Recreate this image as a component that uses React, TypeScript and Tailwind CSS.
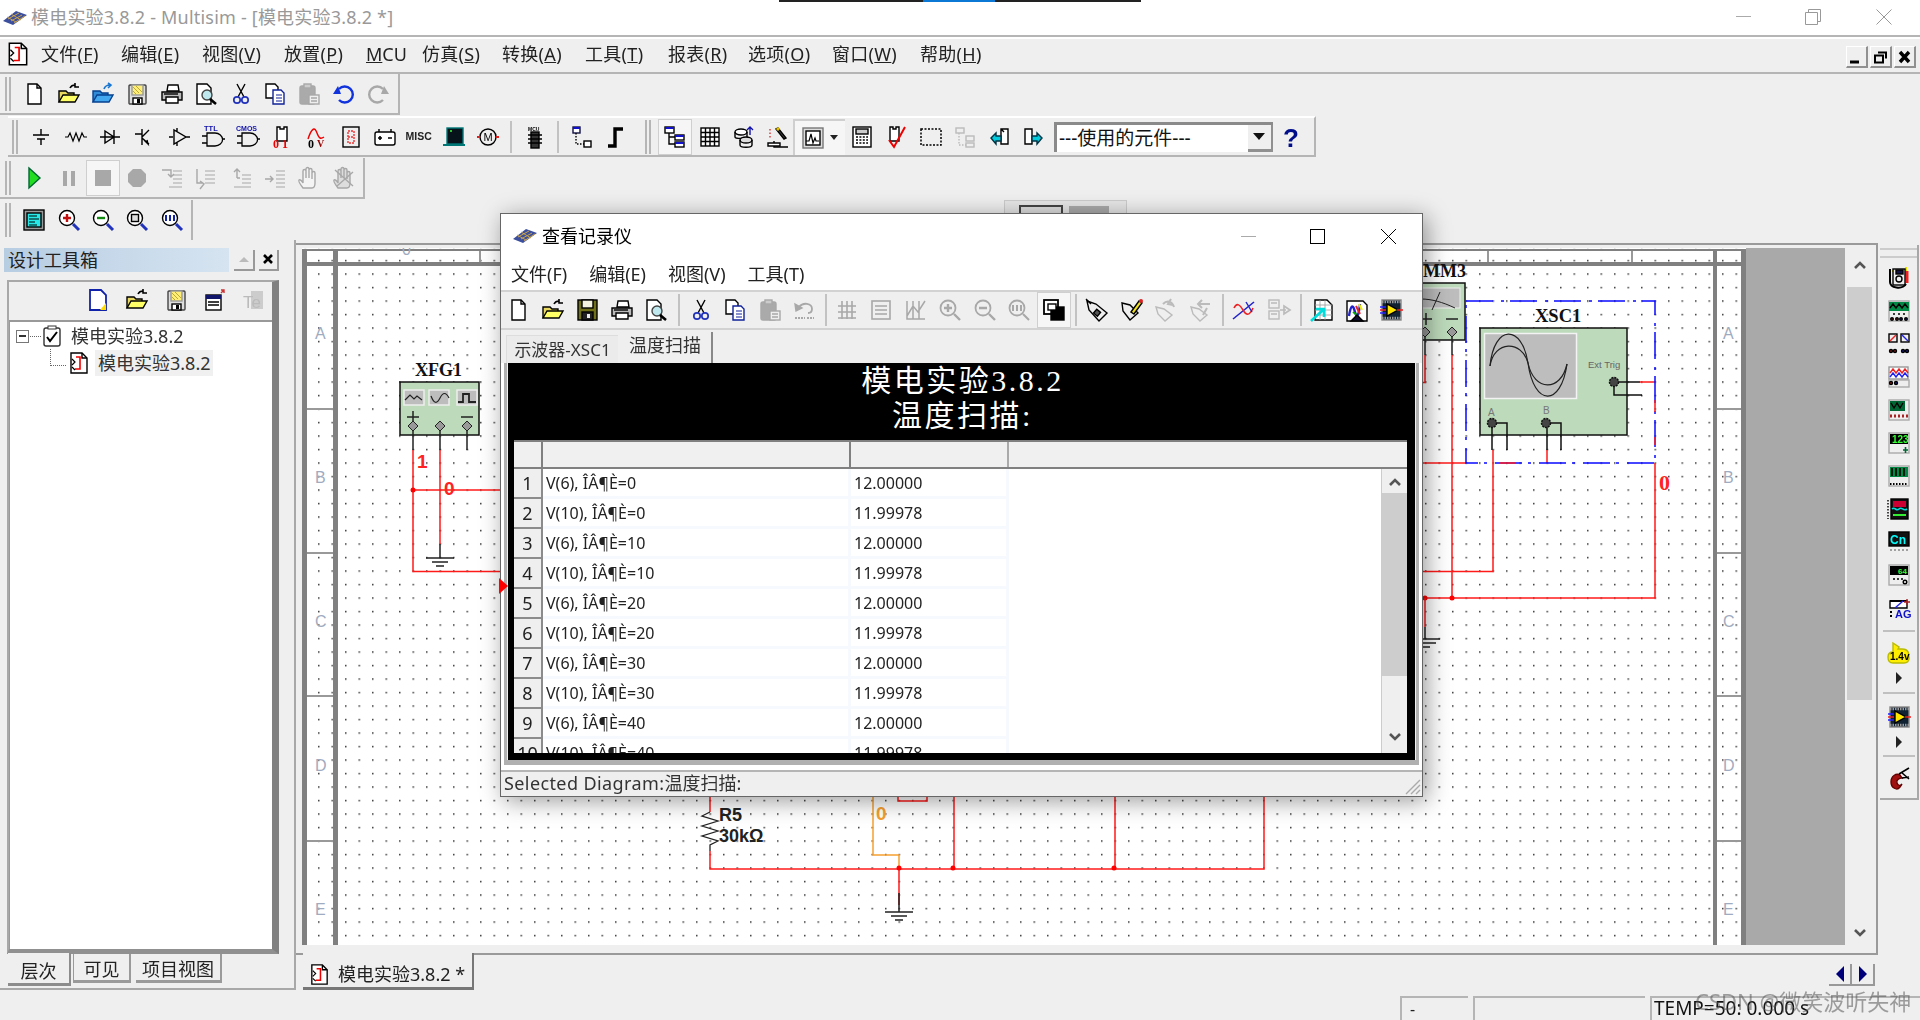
import React from "react";

const S = ({ w = 24, h = 24, children }: any) => (
  <svg width={w} height={h} viewBox="0 0 24 24" fill="none" stroke="#000" strokeWidth="1.4" className="shrink-0 overflow-visible">
    {children}
  </svg>
);
const G = "#a8a8a8";
const logoChip = (
  <svg width="26" height="16" viewBox="0 0 26 16" className="shrink-0">
    <path d="M1 11 L14 1 L25 5 L11 15 Z" fill="#3b4f9e" />
    <path d="M6 9 L17 3 M9 11 L20 5 M12 13 L23 6 M5 7 L14 12 M9 4 L19 10" stroke="#c9a24a" strokeWidth="1" />
  </svg>
);
const schem = (
  <>
    <path d="M4 2h11l5 5v15H4z" fill="#fff" />
    <path d="M15 2v5h5" />
    <path d="M9 6h4v4M13 10v8H8" stroke="#e00" strokeWidth="1.6" />
    <path d="M5 8l3 3-3 3M5 16l3 3" strokeWidth="1.2" />
  </>
);
const ic: any = {
  new: <><path d="M6 2h9l4 4v16H6z" fill="#fff" /><path d="M15 2v4h4" /></>,
  openY: <><path d="M2 20V9h7l2 2h6v3" fill="#e8d860" /><path d="M2 20l4-7h16l-4 7z" fill="#ffff66" /><path d="M13 6c1-2 3-3 5-3M18 1v4h4" strokeWidth="1.6" /></>,
  openB: <><path d="M2 20V9h7l2 2h6v3" fill="#2f8ad8" stroke="#06408f" /><path d="M2 20l4-7h16l-4 7z" fill="#43a7ef" stroke="#06408f" /><path d="M13 7c1-3 3-4 6-4M17 1l3 2-3 3" stroke="#1976d2" strokeWidth="1.6" /></>,
  save: <><rect x="4" y="3" width="17" height="19" rx="1" fill="#ddd" stroke="#444" /><rect x="7" y="3" width="11" height="10" fill="#ffee77" stroke="#999" /><path d="M8 5l6 6M11 4l6 6M8 9l3 3" stroke="#bbaa33" strokeWidth="1" /><rect x="8" y="16" width="9" height="6" fill="#fff" /><rect x="12" y="17" width="3" height="4" fill="#000" stroke="none" /></>,
  saveD: <><rect x="3" y="2" width="19" height="20" fill="#707018" /><rect x="7" y="2" width="11" height="8" fill="#f4f4e0" /><rect x="7" y="14" width="11" height="8" fill="#222" /><rect x="12" y="16" width="3" height="4" fill="#eee" stroke="none" /></>,
  print: <><path d="M8 3h10l1 6H7z" fill="#fff" /><path d="M2 10h20v8H2z" fill="#bbb" /><path d="M6 15h12v6H6z" fill="#fff" /><path d="M4 12h14" /></>,
  preview: <><path d="M3 2h10l4 4v16H3z" fill="#fff" /><circle cx="13" cy="13" r="5" fill="#bfe8ee" stroke="#444" /><path d="M16 17l6 5" strokeWidth="2.6" /></>,
  cut: <><path d="M8 2l7 13M16 2L9 15" /><circle cx="8" cy="18" r="3.2" stroke="#2233bb" strokeWidth="1.7" /><circle cx="16" cy="18" r="3.2" stroke="#2233bb" strokeWidth="1.7" /></>,
  copy: <><path d="M3 2h9l3 3v11H3z" fill="#fff" /><path d="M10 8h8l3 3v11H10z" fill="#fff" stroke="#112299" /><path d="M13 13h6M13 16h6M13 19h6" stroke="#112299" strokeWidth="1.2" /></>,
  paste: <g stroke={G}><rect x="3" y="4" width="15" height="18" rx="2" fill="#aaa" /><rect x="7" y="2" width="7" height="4" fill="#ccc" /><rect x="12" y="13" width="10" height="9" fill="#eee" /><path d="M14 16h6M14 19h6" /></g>,
  undo: <><path d="M7 7a8 8 0 1 1 0 11" stroke="#1133dd" strokeWidth="2.4" /><path d="M1 12l8 0-3-8z" fill="#1133dd" stroke="none" /></>,
  redo: <g stroke={G}><path d="M17 7a8 8 0 1 0 0 11" strokeWidth="2.4" /><path d="M23 12l-8 0 3-8z" fill={G} stroke="none" /></g>,
  undoG: <g stroke={G}><path d="M7 9c4-5 13-4 13 2 0 3-2 4-4 4" strokeWidth="1.8" /><path d="M3 6l1 7 6-3z" fill={G} /><path d="M3 20h10M15 20h7" strokeDasharray="2 1" strokeWidth="2" /></g>,
  src: <><path d="M12 4v6M4 10h16M8 14h8M12 14v6" /></>,
  res: <path d="M1 12h3l2-4 3 8 3-8 3 8 3-8 2 4h3" strokeWidth="1.2" />,
  diode: <><path d="M2 12h20M7 6l9 6-9 6zM16 5v14" /></>,
  trans: <><path d="M10 4v16M10 9l-7 0M10 12l7-7M10 13l7 6M12 15l4 4-1-4" /></>,
  diamond: <><path d="M2 12h4M7 5v14l12-7zM19 12h4M10 3v4M10 17v4" /></>,
  ttl: <><path d="M1 11h5M1 18h5M6 8h8a7 6 0 0 1 0 13H6zM21 14h3" strokeWidth="1.3" /><text x="3" y="6" fontSize="7.5" fontWeight="bold" fill="#11a" stroke="none" fontFamily="Liberation Sans">TTL</text></>,
  cmos: <><path d="M1 11h5M1 18h5M6 8h8a7 6 0 0 1 0 13H6zM21 14h3" strokeWidth="1.3" /><text x="0" y="6" fontSize="7" fontWeight="bold" fill="#11a" stroke="none" fontFamily="Liberation Sans">CMOS</text></>,
  d01: <><path d="M7 2h3v2h4V2h3v14H7z" fill="#fff" /><text x="3" y="23" fontSize="12" fontWeight="bold" fill="#e00" stroke="none" fontFamily="Liberation Serif">0 1</text></>,
  d0v: <><path d="M4 14C8 2 11 2 13 8s4 6 7 4" stroke="#e00" /><text x="4" y="23" fontSize="12" fontWeight="bold" fill="#000" stroke="none" fontFamily="Liberation Serif">0</text><text x="13" y="22" fontSize="10" fontWeight="bold" fill="#900" stroke="none" fontFamily="Liberation Serif">V</text></>,
  seg: <><rect x="4" y="2" width="16" height="20" fill="#eee" /><path d="M9 6h6v12H9zM9 12h6" stroke="#e33" strokeDasharray="2 1" /></>,
  bat: <><path d="M4 7h16a2 2 0 0 1 2 2v9a2 2 0 0 1-2 2H4a2 2 0 0 1-2-2V9a2 2 0 0 1 2-2zM6 4v3M18 4v3" fill="#fff" /><path d="M5 13h4M7 11v4M15 13h4" strokeWidth="1.6" /></>,
  misc: <text x="-1.500" y="15" fontSize="10.500" fontWeight="bold" fill="#222" stroke="none" fontFamily="Liberation Sans">MISC</text>,
  pc: <><rect x="5" y="3" width="16" height="16" fill="#06131a" stroke="#077" /><rect x="1" y="19" width="22" height="2" fill="#077" stroke="none" /><path d="M8 6h2" stroke="#3f3" /></>,
  motor: <><circle cx="12" cy="12" r="8" fill="#eee" /><path d="M1 12h3M20 12h3" stroke="#d22" strokeWidth="2" /><text x="7.5" y="16" fontSize="11" fill="#000" stroke="none" fontFamily="Liberation Sans">M</text></>,
  chip: <><text x="5" y="6" fontSize="5" fontWeight="bold" fill="#000" stroke="none" fontFamily="Liberation Sans">MCU</text><rect x="8" y="7" width="8" height="16" fill="#333" /><path d="M5 10h14M5 14h14M5 18h14" /></>,
  hier: <><rect x="3" y="2" width="7" height="6" fill="#fff" stroke="#114" /><rect x="3" y="2" width="7" height="2" fill="#11c" stroke="none" /><rect x="14" y="16" width="7" height="6" fill="#fff" /><path d="M6 8v11h8" strokeDasharray="1.5 1.5" /></>,
  step: <path d="M4 21h7V4h8" strokeWidth="3.4" />,
  tree: <><rect x="2" y="2" width="9" height="6" fill="#fff" /><rect x="2" y="2" width="9" height="2" fill="#11c" stroke="none" /><rect x="12" y="10" width="9" height="5" fill="#fff" /><rect x="12" y="10" width="9" height="2" fill="#11c" stroke="none" /><rect x="12" y="17" width="9" height="5" fill="#fff" /><rect x="12" y="17" width="9" height="2" fill="#11c" stroke="none" /><path d="M6 8v11h6M6 12h6" /></>,
  grid: <><rect x="3" y="3" width="18" height="18" fill="#fff" /><path d="M3 7.500h18M3 12h18M3 16.500h18M7.500 3v18M12 3v18M16.500 3v18" /></>,
  db: <><ellipse cx="9" cy="7" rx="6" ry="3" fill="#fff" /><path d="M3 7v5c0 2 12 2 12 0V7" /><ellipse cx="14" cy="15" rx="6" ry="3" fill="#ddd" /><path d="M8 15v5c0 3 12 3 12 0v-5" /><path d="M18 2v8M15 5l3-3 3 3" stroke="#11a" /></>,
  pencil: <><path d="M8 16V22H22" /><path d="M2 18h12v3H2z" fill="#fff" /><path d="M12 3l8 10-2 1-8-10z" fill="#444" /><path d="M11 3l2 2" stroke="#e6c000" strokeWidth="3" /><path d="M4 4v10" stroke="#d33" strokeDasharray="1.5 2" /></>,
  graph: <><rect x="2" y="2" width="20" height="20" fill="#ddd" stroke="#777" /><rect x="5" y="5" width="14" height="14" fill="#fff" /><path d="M5 15h3l2-7 2 9 2-5 1 3h3" strokeWidth="1.2" /></>,
  calc: <><rect x="3" y="2" width="18" height="20" fill="#fff" /><rect x="6" y="4" width="12" height="5" fill="#ccc" /><path d="M6 12h12M6 15h12M6 18h12" strokeDasharray="2 1.4" strokeWidth="1.6" /></>,
  check: <><path d="M6 2h3v2h3V2h3v14H6z" fill="#fff" /><path d="M5 15l5 7L21 2" stroke="#e00" strokeWidth="2" /></>,
  dash: <rect x="2" y="4" width="20" height="16" strokeDasharray="2 1.5" strokeWidth="1.5" />,
  treeG: <g stroke="#bbb"><rect x="3" y="3" width="8" height="5" /><rect x="13" y="11" width="8" height="5" /><rect x="13" y="18" width="8" height="4" /><path d="M6 8v12h7" strokeDasharray="1.5 1.5" /></g>,
  arrL: <><path d="M14 4h7v15h-7zM14 4l3 3" fill="#fff" /><path d="M4 13l5-5v3h5v5H9v3z" fill="#0cd" stroke="#034" /></>,
  arrR: <><path d="M3 4h7v15H3z" fill="#fff" /><path d="M20 13l-5-5v3h-5v5h5v3z" fill="#0cd" stroke="#034" /></>,
  q: <text x="3" y="22" fontSize="26" fontWeight="bold" fill="#000e8c" stroke="none" fontFamily="Liberation Sans">?</text>,
  play: <path d="M7 2l11 10-11 10z" fill="#22dd22" stroke="#063" />,
  pause: <><rect x="6" y="5" width="4" height="15" fill={G} stroke="none" /><rect x="14" y="5" width="4" height="15" fill={G} stroke="none" /></>,
  stop: <rect x="4" y="4" width="16" height="16" fill={G} stroke="none" />,
  rec: <path d="M8 3h8l5 5v8l-5 5H8l-5-5V8z" fill={G} stroke="none" />,
  s1: <g stroke={G}><path d="M2 4h9v7M8 8l3 3 3-3" /><path d="M13 5h9M13 9h9M13 13h9M13 17h9M9 21h13" strokeWidth="1.2" /></g>,
  s2: <g stroke={G}><path d="M3 3v14h6M6 23l4-5-4-3" /><path d="M11 5h10M11 9h10M11 13h10M11 17h10" strokeWidth="1.2" /></g>,
  s3: <g stroke={G}><path d="M8 12V3M5 6l3-3 3 3M8 12h3" /><path d="M13 9h9M13 13h9M13 17h9M5 21h17" strokeWidth="1.2" /></g>,
  s4: <g stroke={G}><path d="M2 13h8M7 10l3 3-3 3" /><path d="M13 5h9M13 9h9M13 13h9M13 17h9M13 21h9" strokeWidth="1.2" /></g>,
  hand: <g stroke={G}><path d="M6 22c-3-4-5-7-4-8s3 1 4 3V5a1.500 1.500 0 0 1 3 0v7-9a1.500 1.500 0 0 1 3 0v9-8a1.500 1.500 0 0 1 3 0v9-6a1.500 1.500 0 0 1 3 0v10c0 4-1 5-3 5z" fill="#f4f4f4" /></g>,
  hand2: <g stroke={G}><path d="M6 22c-3-4-5-7-4-8s3 1 4 3V5a1.500 1.500 0 0 1 3 0v7-9a1.500 1.500 0 0 1 3 0v9-8a1.500 1.500 0 0 1 3 0v9-6a1.500 1.500 0 0 1 3 0v10c0 4-1 5-3 5z" fill="#ddd" /><path d="M3 4l18 16M21 6L5 20" /></g>,
  screen: <><rect x="2" y="2" width="20" height="20" fill="#999" /><rect x="5" y="5" width="14" height="14" fill="#27e8e8" /><path d="M7 8h8M7 11h10M7 14h6M7 17h8" strokeWidth="1.1" /></>,
  zi: <><circle cx="10" cy="10" r="7.500" fill="#fff" /><path d="M6 10h8M10 6v8" stroke="#c01010" strokeWidth="2.4" /><path d="M16 16l6 6" stroke="#2233bb" strokeWidth="3" /></>,
  zo: <><circle cx="10" cy="10" r="7.500" fill="#fff" /><path d="M6 10h8" stroke="#128a12" strokeWidth="2.4" /><path d="M16 16l6 6" stroke="#2233bb" strokeWidth="3" /></>,
  za: <><circle cx="10" cy="10" r="7.500" fill="#fff" /><rect x="6.500" y="6.500" width="7" height="7" fill="#ddd" /><path d="M16 16l6 6" stroke="#2233bb" strokeWidth="3" /></>,
  zf: <><circle cx="10" cy="10" r="7.500" fill="#fff" /><path d="M6 7v6M10 7v6M14 7v6" stroke="#1122aa" strokeWidth="2" /><path d="M16 16l6 6" stroke="#2233bb" strokeWidth="3" /></>,
  pNew: <><path d="M4 2h11l5 5v15H4z" fill="#fff" stroke="#1122aa" strokeWidth="1.8" /><path d="M14 22l6-7v7z" fill="#ffdd00" stroke="none" /></>,
  pWin: <><rect x="3" y="7" width="15" height="15" fill="#fff" /><rect x="3" y="7" width="15" height="4" fill="#11166a" stroke="none" /><path d="M5 14h11M5 17h11" /><path d="M18 5l3-3M18 2h3v3" stroke="#c33" /></>,
  pT: <><rect x="9" y="3" width="12" height="18" fill="#ccc" stroke="none" /><text x="1" y="20" fontSize="17" fill="#bbb" stroke="none" fontFamily="Liberation Sans">Te</text></>,
  gGrid: <g stroke={G}><path d="M3 8h18M3 14h18M3 20h18M7 3v18M12 3v18M17 3v18" strokeWidth="1.6" /></g>,
  gList: <g stroke={G}><rect x="3" y="3" width="18" height="18" strokeWidth="1.6" /><path d="M6 8h12M6 12h12M6 16h12" strokeWidth="1.6" /></g>,
  gChart: <g stroke={G}><path d="M3 3v18h18M9 3v18M15 3v18M3 18l6-10 5 6 7-11" strokeWidth="1.5" /></g>,
  gZi: <g stroke={G}><circle cx="10" cy="10" r="7.500" strokeWidth="1.8" /><path d="M6 10h8M10 6v8M16 16l6 6" strokeWidth="2.4" /></g>,
  gZo: <g stroke={G}><circle cx="10" cy="10" r="7.500" strokeWidth="1.8" /><path d="M6 10h8M16 16l6 6" strokeWidth="2.4" /></g>,
  gZf: <g stroke={G}><circle cx="10" cy="10" r="7.500" strokeWidth="1.8" /><path d="M6 7v6M10 7v6M14 7v6M16 16l6 6" strokeWidth="2" /></g>,
  overlay: <><rect x="2" y="2" width="14" height="14" fill="#fff" strokeWidth="1.8" /><rect x="9" y="9" width="13" height="13" fill="#000" /><rect x="6" y="6" width="8" height="6" fill="#fff" strokeWidth="1.4" /></>,
  tag: <><path d="M2 3l9 3 11 9-8 8-10-11z" fill="#eee" /><path d="M1 1l5 5" /><rect x="10" y="12" width="5" height="5" fill="#555" transform="rotate(40 12 14)" /></>,
  tagP: <><path d="M2 5l8 2 8 8-8 7-7-9z" fill="#eee" /><path d="M11 14l8-11 3 2-8 11z" fill="#f0e020" /><circle cx="21" cy="3" r="2" fill="#d22" stroke="none" /></>,
  tagG1: <g stroke="#bbb"><path d="M2 9l8 2 8 6-7 6-7-7z" /><path d="M9 6c4-4 9-3 11 3M17 1l-3 5 5 1" strokeWidth="2" /></g>,
  tagG2: <g stroke="#bbb"><path d="M2 9l8 2 8 6-7 6-7-7z" /><path d="M9 6h12M13 2l-4 4 4 4M18 10l-4 7" strokeWidth="2" /></g>,
  wave: <><path d="M1 21L22 4" stroke="#22c" strokeWidth="1.6" /><path d="M2 10c3-6 6-3 9 2s6 7 10-2" stroke="#e22" strokeWidth="1.6" /><path d="M14 4l6 10" stroke="#22c" strokeWidth="1.4" /></>,
  exp: <g stroke="#bbb"><rect x="2" y="2" width="10" height="8" /><rect x="2" y="13" width="10" height="8" /><path d="M13 12h6M17 8l6 4-6 4z" strokeWidth="1.7" /><path d="M4 5h6M4 16h6" /></g>,
  docA: <><path d="M5 2h12l5 5v15H5z" fill="#fff" /><path d="M5 7h17M5 12h17M5 17h17M10 2v20M15 2v20" stroke="#999" strokeWidth=".8" /><path d="M1 23l12-11M6 11h8v8" stroke="#0dd" strokeWidth="2.6" /></>,
  docG: <><path d="M2 3h16l4 4v16H2z" fill="#fff" /><path d="M4 18c2-12 4-12 6-4s4 2 5-8" stroke="#22c" strokeWidth="2.4" /><path d="M11 8l4 8" stroke="#e22" strokeWidth="2" /><path d="M8 14l4 3" stroke="#0a0" strokeWidth="2" /><path d="M14 6l3 6" stroke="#ee0" strokeWidth="2" /><path d="M6 23l6-6 6 6z" fill="#113" /></>,
  lv: <><rect x="3" y="2" width="19" height="20" fill="#123" stroke="#888" /><path d="M3 4h19M3 20h19" stroke="#999" strokeDasharray="1.5 1" strokeWidth="2.4" /><path d="M8 6v12l11-6z" fill="#ffe600" stroke="#000" /><path d="M1 9h6M1 15h6" stroke="#22f" strokeWidth="1.4" /><path d="M18 12h6M1 12h6" stroke="#e22" strokeWidth="1.4" /></>,
  i1: <><path d="M5 5h3M19 1v9" stroke="#e8e000" strokeWidth="2" /><path d="M20 5v12" stroke="#e22" strokeWidth="3" /><rect x="6" y="3" width="12" height="16" fill="#eee" /><rect x="9" y="4" width="7" height="4" fill="#114" /><circle cx="12" cy="13" r="3" /><path d="M3 3v13c0 6 12 8 16 2" strokeWidth="2" /></>,
  i2: <><rect x="2" y="2" width="20" height="20" fill="#eee" stroke="#aaa" /><rect x="2" y="3" width="20" height="9" fill="#084" stroke="none" /><path d="M3 9l3-4 3 4 3-4 3 4 3-4 3 4" stroke="#000" /><path d="M6 15h2M11 15h2M16 15h2" /><circle cx="5" cy="20" r="1.300" fill="#a22" /><circle cx="10" cy="20" r="1.300" fill="#a22" /><circle cx="14" cy="20" r="1.300" fill="#22a" /><circle cx="19" cy="20" r="1.300" fill="#22a" /></>,
  i3: <><rect x="2" y="2" width="8" height="8" fill="#eee" /><path d="M3 9l6-6" stroke="#e22" /><rect x="14" y="2" width="8" height="8" fill="#eee" /><path d="M15 3l6 6" stroke="#22e" /><path d="M2 19h7M15 19h7" stroke="#111" /><circle cx="4" cy="19" r="1.500" fill="#a22" /><circle cx="8" cy="19" r="1.500" fill="#a22" /><circle cx="16" cy="19" r="1.500" fill="#22a" /><circle cx="20" cy="19" r="1.500" fill="#22a" /></>,
  i4: <><rect x="2" y="2" width="19" height="12" fill="#fff" stroke="#999" /><path d="M3 8l3-4 3 4 3-4 3 4 3-4 3 4" stroke="#e22" /><path d="M3 12l3-4 3 4 3-4 3 4 3-4 3 4" stroke="#22e" /><rect x="2" y="15" width="20" height="7" fill="#eee" stroke="#aaa" /><circle cx="4" cy="18" r="1.500" fill="#a22" /><circle cx="9" cy="18" r="1.500" fill="#22a" /></>,
  i5: <><rect x="2" y="2" width="20" height="20" fill="#eee" stroke="#aaa" /><rect x="3" y="3" width="15" height="10" fill="#063" stroke="none" /><path d="M4 5l3 5 3-5 3 5 3-5" stroke="#000" /><path d="M3 18h18" stroke="#a22" strokeWidth="3" strokeDasharray="2 2" /></>,
  i6: <><rect x="2" y="2" width="20" height="20" fill="#eee" stroke="#aaa" /><rect x="3" y="3" width="18" height="10" fill="#000" stroke="none" /><text x="5" y="12" fontSize="10" fontWeight="bold" fill="#3f3" stroke="none" fontFamily="Liberation Sans">123</text><path d="M16 19h5M18.500 16v6" stroke="#063" strokeWidth="1.6" /></>,
  i7: <><rect x="2" y="2" width="20" height="20" fill="#eee" stroke="#aaa" /><rect x="3" y="3" width="18" height="10" fill="#084" stroke="none" /><path d="M5 4v8M9 4v8M13 4v8M17 4v8" stroke="#000" strokeWidth="1.6" /><path d="M3 20h18" strokeDasharray="1.500 1.500" strokeWidth="2" /></>,
  i8: <><rect x="4" y="2" width="17" height="20" fill="#111" /><path d="M6 4h13v6H6z" fill="#c03" stroke="none" /><path d="M5 12c3-3 4 3 7 0s4 3 8 0" stroke="#0dd" strokeWidth="1.6" /><path d="M6 18h13" stroke="#3e3" strokeWidth="2" /><path d="M1 3v19" strokeDasharray="1.500 1.500" /></>,
  i9: <><rect x="2" y="2" width="20" height="14" fill="#111" /><text x="3" y="14" fontSize="12" fontWeight="bold" fill="#0ff" stroke="none" fontFamily="Liberation Sans">Cn</text><path d="M3 20h18" stroke="#888" strokeDasharray="2 2" /></>,
  i10: <><rect x="2" y="2" width="20" height="20" fill="#eee" stroke="#aaa" /><rect x="3" y="3" width="18" height="9" fill="#000" stroke="none" /><text x="11" y="11" fontSize="8" fontWeight="bold" fill="#3f3" stroke="none" fontFamily="Liberation Sans">64</text><path d="M6 16h2M10 16h2M14 16h2" /><circle cx="18" cy="19" r="1.800" /></>,
  i11: <><path d="M3 5h17v7H3z" fill="#fff" /><path d="M3 5h17" strokeWidth="2" /><path d="M8 12l8-7" stroke="#22e" /><path d="M20 3v6M17 6h6" stroke="#a22" /><text x="8" y="22" fontSize="11" fontWeight="bold" fill="#11c" stroke="none" fontFamily="Liberation Sans">AG</text><path d="M4 15v6" strokeDasharray="2 2" strokeWidth="2" /></>,
  volt: <><path d="M6 2l6 4-1 2h4c7 0 7 5 7 9s-2 5-5 5H6c-4 0-5-3-5-6s2-5 5-5z" fill="#ffee00" stroke="#bb0" /><text x="3" y="19" fontSize="10" fontWeight="bold" fill="#000" stroke="none" fontFamily="Liberation Sans">1.4v</text></>,
  clamp: <><path d="M4 16c0-6 5-9 9-7l2 3c-3 0-6 2-5 5s3 3 5 1l-2 3c-3 4-9 1-9-5z" fill="#a01010" stroke="#600" /><path d="M12 8l10-6M15 12l7-1M14 6l8 7" strokeWidth="1.6" /></>,
};

const Icon = ({ n, s = 24 }: any) => <S w={s} h={s}>{ic[n]}</S>;
const Btn = ({ n, active, w = "w-[34.4px]" }: any) => (
  <div className={`${w} h-[36px] flex items-center justify-center shrink-0 ${active ? "bg-[#f6f6f6] border border-[#cfcfcf]" : ""}`}>
    <Icon n={n} />
  </div>
);
const Grip = () => (
  <div className="flex gap-[2px] h-[34px] shrink-0">
    <div className="w-[2px] bg-[#b5b5b5]" />
    <div className="w-[2px] bg-[#b5b5b5]" />
  </div>
);
const Sep = ({ w }: any) => (
  <div className={`${w} flex justify-center shrink-0`}>
    <div className="w-[2px] h-[32px] bg-[#c2c2c2]" />
  </div>
);

const menus: any = [
  ["文件(", "F", ")", "w-[61px]", "ml-[41px]"],
  ["编辑(", "E", ")", "w-[62px]", "ml-[19px]"],
  ["视图(", "V", ")", "w-[64px]", "ml-[19px]"],
  ["放置(", "P", ")", "w-[62px]", "ml-[18px]"],
];

const MenuItem = ({ a, u, b, cls }: any) => (
  <span className={`whitespace-nowrap shrink-0 tracking-[0.3px] ${cls}`}>
    {a}
    <span className="underline">{u}</span>
    {b}
  </span>
);

const Schematic = () => (
  <svg width="1444" height="697" viewBox="302 248 1444 697" className="shrink-0 block bg-white">
    <defs>
      <pattern id="dots" patternUnits="userSpaceOnUse" x="318" y="273.300" width="13.500" height="13.500">
        <rect width="1.500" height="1.500" fill="#333" />
      </pattern>
    </defs>
    <rect x="302" y="248" width="1444" height="697" fill="url(#dots)" />
    <g fill="#808080">
      <rect x="302" y="249" width="1444" height="2" />
      <rect x="302" y="262" width="1444" height="4" />
      <rect x="302" y="249" width="5" height="696" />
      <rect x="333" y="249" width="5" height="696" />
      <rect x="1713" y="249" width="4" height="696" />
      <rect x="1741" y="249" width="5" height="696" />
    </g>
    <g fill="#999">
      {[408, 552, 695, 840].map((y) => (
        <g key={y}>
          <rect x="307" y={y} width="26" height="2" />
          <rect x="1717" y={y} width="24" height="2" />
        </g>
      ))}
      {[479, 623, 767, 911, 1055, 1199, 1343, 1487, 1631].map((x) => (
        <rect key={x} x={x} y="251" width="2" height="11" />
      ))}
    </g>
    <g fontFamily="Liberation Sans" fontSize="16" fill="#9fabc0">
      {[["A", 339], ["B", 483], ["C", 627], ["D", 771], ["E", 915]].map(([l, y]: any) => (
        <g key={l}>
          <text x="315" y={y}>{l}</text>
          <text x="1723" y={y}>{l}</text>
        </g>
      ))}
      <text x="402" y="255">0</text>
    </g>

    {/* XFG1 */}
    <text x="415" y="376" fontFamily="Liberation Serif" fontWeight="bold" fontSize="18" fill="#111">XFG1</text>
    <rect x="400" y="382" width="79" height="53" fill="#bddabb" stroke="#111" strokeWidth="1.500" />
    {[404, 429, 457].map((x) => (
      <rect key={x} x={x} y="390" width="20" height="15" fill="#bdbdbd" stroke="#eee" strokeWidth="1.500" />
    ))}
    <g fill="none" stroke="#222" strokeWidth="1.200">
      <path d="M405 400l5-5 4 4 3-3 5 4" />
      <path d="M431 396c3 8 6 8 9 2s6-6 9 0" />
      <path d="M458 402h5v-8h6v8h7" strokeWidth="1.800" />
      <path d="M407 417h12M413 411v12M461 417h12" strokeWidth="1.500" />
    </g>
    {[413, 440, 467].map((x) => (
      <g key={x}>
        <path d={`M${x} 427v23`} stroke="#222" strokeWidth="1.500" />
        <path d={`M${x} 421l5 5-5 5-5-5z`} fill="#999" stroke="#222" />
      </g>
    ))}
    <g fill="none" stroke="#ff1a1a" strokeWidth="1.500">
      <path d="M413 450V571.500H500M413 490H500M440 450V544" />
    </g>
    <circle cx="413" cy="490" r="2.500" fill="#f00" />
    <path d="M440 544V558M426 558h28M432 562h16M436 566h8" stroke="#222" strokeWidth="1.500" fill="none" />
    <text x="417" y="468" fill="#f22" fontFamily="Liberation Sans" fontWeight="bold" fontSize="19">1</text>
    <text x="444" y="495" fill="#f22" fontFamily="Liberation Sans" fontWeight="bold" fontSize="19">0</text>

    {/* right side */}
    <text x="1423" y="277" fontFamily="Liberation Serif" fontWeight="bold" fontSize="18" fill="#111">MM3</text>
    <rect x="1380" y="283" width="85" height="57" fill="#bddabb" stroke="#111" strokeWidth="1.500" />
    <rect x="1385" y="288" width="75" height="20" fill="#bdbdbd" stroke="#eee" />
    <path d="M1395 308c15-12 35-12 60 0M1432 310l8-18" stroke="#222" fill="none" />
    <path d="M1420 319h12M1426 313v12M1446 319h12" stroke="#222" strokeWidth="1.500" />
    {[1425, 1452].map((x) => (
      <g key={x}>
        <path d={`M${x} 332v23`} stroke="#222" strokeWidth="1.500" />
        <path d={`M${x} 327l5 5-5 5-5-5z`} fill="#999" stroke="#222" />
      </g>
    ))}
    <g fill="none" stroke="#ff1a1a" strokeWidth="1.500">
      <path d="M1425 355V382.500H1420M1452 355V598M1420 463H1466M1425 598H1655V463M1493 450V571.500H1420M1547 450V463M1640 382H1655" />
    </g>
    <rect x="1466" y="301" width="189" height="162" fill="none" stroke="#0a0aff" strokeWidth="1.500" strokeDasharray="27 8 3 6" />
    <path d="M1655 400V412M1655 437V445M1500 463H1515" stroke="#ff1a1a" strokeWidth="1.500" />
    <circle cx="1425" cy="598" r="2.500" fill="#f00" />
    <circle cx="1452" cy="598" r="2.500" fill="#f00" />
    <path d="M1425 598v29" stroke="#ff1a1a" strokeWidth="1.500" />
    <path d="M1425 627v12M1410 639h30M1414 643h22M1419 647h11" stroke="#222" strokeWidth="1.500" fill="none" />

    <text x="1535" y="322" fontFamily="Liberation Serif" fontWeight="bold" fontSize="18.500" fill="#111">XSC1</text>
    <rect x="1480" y="328" width="147" height="107" fill="#bddabb" stroke="#111" strokeWidth="1.500" />
    <rect x="1484.500" y="333.500" width="92" height="65" fill="#bdbdbd" stroke="#f3f3f3" strokeWidth="1.500" />
    <g fill="none" stroke="#222" strokeWidth="1.200">
      <path d="M1490 366C1494 324 1522 324 1528 363C1534 407 1561 407 1567 364" />
      <path d="M1490 366C1494 340 1522 340 1528 363C1534 392 1561 392 1567 364" />
    </g>
    <text x="1588" y="368" fontFamily="Liberation Sans" fontSize="9.500" fill="#666">Ext Trig</text>
    <text x="1488" y="416" fontFamily="Liberation Sans" fontSize="10" fill="#777">A</text>
    <text x="1543" y="414" fontFamily="Liberation Sans" fontSize="10" fill="#777">B</text>
    <g fill="none" stroke="#111" strokeWidth="1.500">
      <path d="M1492 423V450M1492 423H1507V450M1547 423V450M1547 423H1561V450M1614 382H1640M1614 382V395H1642" />
    </g>
    {[[1492, 423], [1546, 423], [1614, 382]].map(([x, y]) => (
      <circle key={x} cx={x} cy={y} r="4.500" fill="#444" stroke="#111" strokeWidth="1.500" strokeDasharray="2 1" />
    ))}
    <text x="1659" y="490" fill="#f22" fontFamily="Liberation Serif" fontWeight="bold" fontSize="22">0</text>

    {/* lower wires */}
    <g fill="none" stroke="#ff1a1a" strokeWidth="1.500">
      <path d="M710 797V812M954 797V868M1115 797V868M1264 797V869H899M898 797V801H927V797" />
      <path d="M710 851V869H899" />
    </g>
    <path d="M710 812l-8 4 16 5-16 5 16 5-16 5 16 5-8 4v6" fill="none" stroke="#222" strokeWidth="1.300" />
    <path d="M873 797V855H899V869" fill="none" stroke="#f5a030" strokeWidth="1.500" />
    <path d="M899 869V905" stroke="#ff1a1a" strokeWidth="1.500" />
    <path d="M899 893V912M885 912h28M891 916h16M895 920h8" stroke="#222" strokeWidth="1.500" fill="none" />
    {[899, 953, 1114].map((x) => (
      <circle key={x} cx={x} cy="868" r="2.500" fill="#f00" />
    ))}
    <text x="876" y="820" fill="#f5a030" fontFamily="Liberation Sans" fontWeight="bold" fontSize="19">0</text>
    <text x="719" y="821" fill="#222" fontFamily="Liberation Sans" fontWeight="bold" fontSize="18">R5</text>
    <text x="719" y="842" fill="#222" fontFamily="Liberation Sans" fontWeight="bold" fontSize="18">30kΩ</text>
  </svg>
);

const rows = [
  ["V(6), ÎÂ¶È=0", "12.00000"],
  ["V(10), ÎÂ¶È=0", "11.99978"],
  ["V(6), ÎÂ¶È=10", "12.00000"],
  ["V(10), ÎÂ¶È=10", "11.99978"],
  ["V(6), ÎÂ¶È=20", "12.00000"],
  ["V(10), ÎÂ¶È=20", "11.99978"],
  ["V(6), ÎÂ¶È=30", "12.00000"],
  ["V(10), ÎÂ¶È=30", "11.99978"],
  ["V(6), ÎÂ¶È=40", "12.00000"],
  ["V(10), ÎÂ¶È=40", "11.99978"],
];

const Dialog = () => (
  <div className="absolute left-[500px] top-[213px] w-[923px] h-[584px] bg-white border border-[#666] shadow-[4px_4px_22px_rgba(0,0,0,0.4)] flex flex-col z-10">
    <div className="h-[44px] shrink-0 flex items-center pl-[11px] text-[18px] text-black relative">
      {logoChip}
      <span className="ml-[4px]">查看记录仪</span>
      <div className="absolute left-[740px] top-[22px] w-[15px] h-px bg-[#aaa]" />
      <div className="absolute left-[809px] top-[15px] w-[15px] h-[15px] border border-black" />
      <svg className="absolute left-[880px] top-[15px]" width="15" height="15" viewBox="0 0 15 15"><path d="M0 0L15 15M15 0L0 15" stroke="#000" /></svg>
    </div>
    <div className="h-[32px] shrink-0 flex items-center text-[18px] text-[#222] pl-[10px] gap-[22px] blur-[0.4px]">
      <span>文件(F)</span>
      <span>编辑(E)</span>
      <span>视图(V)</span>
      <span>工具(T)</span>
    </div>
    <div className="h-[40px] shrink-0 bg-[#efefef] border-t-2 border-b-2 border-[#d2d2d2] flex items-center blur-[0.3px]">
      <div className="-ml-[2px] w-[2px] shrink-0" />
      {["new", "openY", "saveD", "print", "preview"].map((n) => <Btn key={n} n={n} w="w-[34.5px]" />)}
      <Sep w="w-[10px]" />
      {["cut", "copy", "paste", "undoG"].map((n) => <Btn key={n} n={n} w="w-[34.5px]" />)}
      <Sep w="w-[8px]" />
      {["gGrid", "gList", "gChart", "gZi", "gZo", "gZf"].map((n) => <Btn key={n} n={n} w="w-[34.5px]" />)}
      <Btn n="overlay" active w="w-[34.5px]" />
      <Sep w="w-[9px]" />
      {["tag", "tagP", "tagG1", "tagG2"].map((n) => <Btn key={n} n={n} w="w-[34.5px]" />)}
      <Sep w="w-[9px]" />
      {["wave", "exp"].map((n) => <Btn key={n} n={n} w="w-[34.5px]" />)}
      <Sep w="w-[9px]" />
      {["docA", "docG", "lv"].map((n) => <Btn key={n} n={n} w="w-[34.5px]" />)}
    </div>
    <div className="h-[33px] shrink-0 bg-[#efefef] flex items-end pl-[5px] text-[17px] text-[#333] blur-[0.3px]">
      <div className="w-[112px] h-[28px] bg-[#ebebeb] border-t border-l border-[#ddd] flex items-center justify-center">示波器-XSC1</div>
      <div className="w-[94px] h-[31px] bg-[#efefef] border-r-2 border-[#888] flex items-start justify-center ml-[1px] text-[18px] leading-[26px]">温度扫描</div>
    </div>
    <div className="h-[402px] shrink-0 bg-[#efefef] mx-[3px] border-b-[5px] border-x-[3px] border-[#b0b0b0] flex flex-col">
      <div className="h-[397px] bg-black pl-[6px] pr-[8px] flex flex-col mx-[1px] pb-[7px]">
        <div className="h-[77px] shrink-0 text-white text-center [font-family:'Liberation_Serif','Noto_Sans_CJK_SC',serif] text-[30px] leading-[35px] tracking-[2.5px] pl-[4px]">
          <div>模电实验3.8.2</div>
          <div>温度扫描:</div>
        </div>
        <div className="flex-1 min-h-0 border-t-[2px] border-[#808080] bg-white flex flex-col overflow-hidden">
          <div className="h-[27px] shrink-0 flex bg-[#f0f0f0] border-b-2 border-[#808080]">
            <div className="w-[29px] border-r-2 border-[#808080]" />
            <div className="w-[308px] border-r-2 border-[#808080]" />
            <div className="w-[158px] border-r-2 border-[#aaa]" />
          </div>
          <div className="flex-1 min-h-0 flex">
            <div className="flex-1 min-w-0 overflow-hidden text-[16px] text-[#222] blur-[0.3px]">
              {rows.map(([a, b], i) => (
                <div key={i} className="h-[30px] flex items-stretch">
                  <div className="w-[29px] shrink-0 bg-[#efefef] border-r-2 border-b-2 border-[#8c8c8c] flex items-center justify-center text-[18px]">{i + 1}</div>
                  <div className="w-[308px] shrink-0 border-r-[3px] border-b-[3px] border-[#f6f9fe] pl-[3px] flex items-center whitespace-nowrap">{a}</div>
                  <div className="w-[158px] shrink-0 border-r-[3px] border-b-[3px] border-[#f6f9fe] pl-[3px] flex items-center">{b}</div>
                </div>
              ))}
            </div>
            <div className="w-[26px] shrink-0 bg-[#efefef] border-l border-[#ccc] flex flex-col items-center">
              <svg className="mt-[8px] shrink-0" width="14" height="10" viewBox="0 0 14 10"><path d="M2 8L7 3L12 8" stroke="#555" strokeWidth="2.6" fill="none" /></svg>
              <div className="w-full h-[183px] mt-[6px] bg-[#cdcdcd] shrink-0" />
              <svg className="mt-[56px] shrink-0" width="14" height="10" viewBox="0 0 14 10"><path d="M2 2L7 7L12 2" stroke="#555" strokeWidth="2.6" fill="none" /></svg>
            </div>
          </div>
        </div>
      </div>
    </div>
    <div className="flex-1 bg-[#efefef] mt-[5px] border-t-2 border-[#b5b5b5] flex items-center pl-[3px] text-[18px] text-[#333] relative blur-[0.3px] leading-none pb-[2px]">
      <span className="tracking-[0.4px]">Selected Diagram:</span>温度扫描:
      <svg className="absolute right-[1px] bottom-[1px]" width="16" height="16" viewBox="0 0 16 16"><path d="M1 15L15 1M6 15L15 6M11 15L15 11" stroke="#aaa" strokeWidth="1.400" /></svg>
    </div>
    <div className="absolute -left-[2px] top-[364px] w-0 h-0 border-y-[8px] border-y-transparent border-l-[9px] border-l-[#f00]" />
  </div>
);

const rightTools = ["i1", "i2", "i3", "i4", "i5", "i6", "i7", "i8", "i9", "i10", "i11"];
const TriR = () => <div className="w-0 h-0 border-y-[6px] border-y-transparent border-l-[6px] border-l-[#222]" />;
const RSep = ({ h }: any) => (
  <div className={`${h} w-full flex items-center justify-center shrink-0`}>
    <div className="w-[32px] h-[2px] bg-[#c0c0c0]" />
  </div>
);

export default function App() {
  return (
    <div className="relative w-[1920px] h-[1020px] overflow-hidden bg-[#efefef] flex flex-col text-[#222] [font-family:'Noto_Sans','Noto_Sans_CJK_SC',sans-serif]">
      {/* title bar */}
      <div className="h-[35px] shrink-0 bg-white flex items-center relative pl-[2px] text-[18px] text-[#999]">
        {logoChip}
        <span className="ml-[3px] tracking-[0.2px]">模电实验3.8.2 - Multisim - [模电实验3.8.2 *]</span>
        <div className="absolute left-[779px] top-0 w-[362px] h-[2px] bg-[#222]">
          <div className="w-[72px] h-[2px] bg-[#0a78d4] ml-[144px]" />
        </div>
        <div className="absolute left-[1736px] top-[16px] w-[15px] h-px bg-[#aaa]" />
        <svg className="absolute left-[1805px] top-[9px]" width="16" height="16" viewBox="0 0 16 16" fill="none" stroke="#999"><path d="M.5 3.500h12v12H.5zM3.500 3.500V.5h12v12h-3" /></svg>
        <svg className="absolute left-[1876px] top-[9px]" width="16" height="16" viewBox="0 0 16 16"><path d="M.5.5L15.500 15.500M15.500.5L.5 15.500" stroke="#999" /></svg>
      </div>
      {/* menu */}
      <div className="h-[39px] shrink-0 border-t-2 border-[#b5b5b5] border-b-2 flex items-center relative bg-[#efefef] text-[18px] text-[#222]">
        <div className="absolute left-0 right-0 top-0 h-[2px] bg-white" />
        <div className="absolute left-[5px] top-[3px] blur-[0.3px]"><S w={26} h={28}>{schem}</S></div>
        <div className="flex items-center blur-[0.4px] w-full">
          {menus.map(([a, u, b, w, ml]: any) => (
            <MenuItem key={a} a={a} u={u} b={b} cls={`${w} ${ml}`} />
          ))}
          <span className="ml-[20px] shrink-0 w-[36px]"><span className="underline">M</span>CU</span>
          <MenuItem a="仿真(" u="S" b=")" cls="ml-[20px] w-[61px]" />
          <MenuItem a="转换(" u="A" b=")" cls="ml-[19px] w-[63px]" />
          <MenuItem a="工具(" u="T" b=")" cls="ml-[20px] w-[62px]" />
          <MenuItem a="报表(" u="R" b=")" cls="ml-[21px] w-[60px]" />
          <MenuItem a="选项(" u="O" b=")" cls="ml-[20px] w-[65px]" />
          <MenuItem a="窗口(" u="W" b=")" cls="ml-[19px] w-[68px]" />
          <MenuItem a="帮助(" u="H" b=")" cls="ml-[20px] w-[63px]" />
        </div>
        <div className="absolute left-[1846px] top-[9px] flex gap-[2px]">
          {[
            <path key="a" d="M3 15h9" stroke="#000" strokeWidth="3" />,
            <path key="b" d="M7 5.500h8v6M4 8.500h8v7H4z" stroke="#000" strokeWidth="2" fill="none" />,
            <path key="c" d="M5 5l9 10M14 5L5 15" stroke="#000" strokeWidth="3.400" />,
          ].map((p, i) => (
            <div key={i} className="w-[22px] h-[22px] bg-[#efefef] border-r-2 border-b-2 border-[#909090] border-t border-l border-t-white border-l-white">
              <svg width="19" height="19" viewBox="0 0 19 19">{p}</svg>
            </div>
          ))}
        </div>
      </div>
      {/* toolbars */}
      <div className="h-[42px] shrink-0 flex blur-[0.3px]">
        <div className="w-[400px] h-[41px] flex items-center border-r-2 border-b-2 border-[#b5b5b5] pl-[5px]">
          <Grip />
          <div className="w-[6px] shrink-0" />
          {["new", "openY", "openB", "save", "print", "preview", "cut", "copy", "paste", "undo", "redo"].map((n) => <Btn key={n} n={n} />)}
        </div>
      </div>
      <div className="h-[42px] shrink-0 flex pl-[8px] blur-[0.3px]">
        <div className="w-[632px] h-[41px] flex items-center border-b-2 border-[#b5b5b5] border-t-2 border-t-white pl-[4px]">
          <Grip />
          <div className="w-[6px] shrink-0" />
          {["src", "res", "diode", "trans", "diamond", "ttl", "cmos", "d01", "d0v", "seg", "bat", "misc", "pc", "motor"].map((n) => <Btn key={n} n={n} />)}
          <Sep w="w-[12px]" />
          <Btn n="chip" />
          <Sep w="w-[13px]" />
          <Btn n="hier" />
          <Btn n="step" />
        </div>
        <div className="w-[676px] h-[41px] flex items-center border-r-2 border-b-2 border-[#b5b5b5] border-t-2 border-t-white pl-[5px]">
          <Grip />
          <div className="w-[7px] shrink-0" />
          <Btn n="tree" active />
          {["grid", "db", "pencil"].map((n) => <Btn key={n} n={n} />)}
          <div className="w-[52px] h-[36px] -ml-[3px] shrink-0 bg-[#f6f6f6] border-t-2 border-l-2 border-[#cfcfcf] flex items-center pl-[6px] gap-[2px]">
            <Icon n="graph" />
            <div className="ml-[3px] w-0 h-0 border-x-[4px] border-x-transparent border-t-[5px] border-t-[#222]" />
          </div>
          {["calc", "check", "dash", "treeG", "arrL", "arrR"].map((n) => <Btn key={n} n={n} />)}
          <div className="w-[219px] h-[30px] ml-[3px] shrink-0 bg-white border-t-[3px] border-l-[3px] border-[#8a8a8a] flex items-center text-[19px] leading-none text-[#111] pl-[2px] relative">
            ---使用的元件---
            <div className="absolute right-0 top-0 bottom-0 w-[25px] bg-[#efefef] border-r-2 border-b-[3px] border-[#909090] flex items-center justify-center">
              <div className="w-0 h-0 border-x-[6px] border-x-transparent border-t-[7px] border-t-[#111]" />
            </div>
          </div>
          <div className="w-[38px] flex justify-center shrink-0"><Icon n="q" /></div>
        </div>
      </div>
      <div className="h-[42px] shrink-0 flex blur-[0.3px]">
        <div className="w-[365px] h-[41px] flex items-center border-r-2 border-b-2 border-[#b5b5b5] pl-[5px]">
          <Grip />
          <div className="w-[6px] shrink-0" />
          <Btn n="play" />
          <Btn n="pause" />
          <Btn n="stop" active />
          {["rec", "s1", "s2", "s3", "s4", "hand", "hand2"].map((n) => <Btn key={n} n={n} />)}
        </div>
      </div>
      <div className="h-[40px] shrink-0 flex relative">
        <div className="w-[193px] h-[40px] flex items-center border-r-2 border-[#b5b5b5] pl-[5px] blur-[0.3px]">
          <Grip />
          <div className="w-[6px] shrink-0" />
          {["screen", "zi", "zo", "za", "zf"].map((n) => <Btn key={n} n={n} />)}
        </div>
        <div className="absolute left-[1004px] top-0 w-[123px] h-[14px] bg-[#e6e6e6] border-t border-x border-[#ccc] flex items-end pl-[14px] gap-[6px]">
          <div className="w-[44px] h-[9px] bg-[#ddd] border-t-2 border-x-2 border-[#444]" />
          <div className="w-[40px] h-[8px] bg-[#aaa]" />
        </div>
      </div>
      {/* main */}
      <div className="h-[750px] shrink-0 flex">
        <div className="w-[296px] shrink-0 flex flex-col border-r-2 border-[#a8a8a8] border-b-2 blur-[0.3px]">
          <div className="h-[24px] mt-[8px] ml-[4px] shrink-0 flex items-center">
            <div className="w-[225px] h-[24px] bg-linear-to-r from-[#b7cde2] to-[#d6e4f1] pl-[4px] flex items-center text-[18px] text-[#222]">设计工具箱</div>
            <div className="w-[21px] h-[21px] ml-[5px] border-r-2 border-b-2 border-[#999] bg-[#efefef] flex items-center justify-center">
              <div className="w-0 h-0 border-x-[5px] border-x-transparent border-b-[5px] border-b-[#bbb]" />
            </div>
            <div className="w-[20px] h-[21px] ml-[4px] border-r-2 border-b-2 border-[#999] bg-[#efefef] flex items-center justify-center">
              <svg width="10" height="10" viewBox="0 0 10 10"><path d="M1 1L9 9M9 1L1 9" stroke="#000" strokeWidth="2.600" /></svg>
            </div>
          </div>
          <div className="w-[272px] h-[674px] ml-[7px] mt-[8px] shrink-0 flex flex-col border-t-2 border-l-2 border-[#a8a8a8] border-r-[7px] border-r-[#808080] border-b-[5px] border-b-[#909090]">
            <div className="h-[38px] shrink-0 flex items-center pb-[3px]">
              <div className="w-[69px] shrink-0" />
              {["pNew", "openY", "save", "pWin", "pT"].map((n) => (
                <div key={n} className="w-[39.200px] flex justify-center shrink-0"><Icon n={n} /></div>
              ))}
            </div>
            <div className="flex-1 bg-white border-t-2 border-l border-[#999] relative text-[18px] text-[#333] leading-none">
              <div className="absolute left-[6px] top-[3px] flex items-center">
                <div className="w-[13px] h-[13px] border border-[#777] flex items-center justify-center">
                  <div className="w-[7px] h-[2px] bg-[#333]" />
                </div>
                <div className="w-[11px] border-t border-dotted border-[#666] ml-px" />
                <svg width="20" height="22" viewBox="0 0 20 22" className="ml-px"><rect x="2" y="3" width="16" height="18" rx="2" fill="#fff" stroke="#333" strokeWidth="1.400" /><rect x="6" y="1" width="8" height="3" fill="#fff" stroke="#333" /><path d="M5 12l3 4 7-9" stroke="#000" strokeWidth="2" fill="none" /></svg>
                <span className="ml-[9px] leading-[22px]">模电实验3.8.2</span>
              </div>
              <div className="absolute left-[40px] top-[27px] w-[16px] h-[17px] border-l border-b border-dotted border-[#666]" />
              <div className="absolute left-[57px] top-[29px]"><S w={24} h={24}>{schem}</S></div>
              <div className="absolute left-[85px] top-[28px] w-[118px] h-[26px] bg-[#f0f0f0] flex items-center pl-[3px]">模电实验3.8.2</div>
            </div>
          </div>
          <div className="flex-1 flex items-start text-[18px] text-[#222] pl-[8px] leading-none">
            <div className="w-[63px] h-[33px] pt-[5px] bg-[#efefef] border-r-2 border-b-[3px] border-[#8c8c8c] flex items-center justify-center -mt-[1px]">层次</div>
            <div className="w-[58px] h-[29px] pt-[4px] ml-[2px] border-l border-r-2 border-b-[3px] border-[#9a9a9a] flex items-center justify-center">可见</div>
            <div className="w-[86px] h-[29px] pt-[4px] ml-[5px] border-r-2 border-b-[3px] border-[#9a9a9a] flex items-center justify-center">项目视图</div>
          </div>
        </div>

        <div className="w-[1584px] shrink-0 flex flex-col">
          <div className="flex-1 min-h-0 flex">
            <div className="w-[1582px] shrink-0 flex flex-col">
              <div className="mt-[3px] h-[712px] shrink-0 border-t-2 border-r-2 border-b-2 border-[#9a9a9a] pt-[3px] pl-[6px] flex">
                <Schematic />
                <div className="w-[99px] h-[697px] shrink-0 bg-[#a9a9a9]" />
                <div className="w-[25px] h-[697px] ml-[2px] shrink-0 bg-[#efefef] flex flex-col items-center relative">
                  <svg className="mt-[12px] shrink-0" width="14" height="10" viewBox="0 0 14 10"><path d="M2 8L7 3L12 8" stroke="#555" strokeWidth="2.600" fill="none" /></svg>
                  <div className="w-full h-[413px] mt-[17px] shrink-0 bg-[#cdcdcd]" />
                  <svg className="absolute bottom-[7px]" width="14" height="10" viewBox="0 0 14 10"><path d="M2 2L7 7L12 2" stroke="#555" strokeWidth="2.600" fill="none" /></svg>
                </div>
              </div>
              <div className="flex-1 flex items-start justify-between pl-[7px] pr-[3px]">
                <div className="w-[171px] h-[37px] pt-[8px] -mt-[2px] bg-[#efefef] border-r-2 border-b-[3px] border-[#777] flex items-center pl-[5px] text-[18px] leading-none blur-[0.3px]">
                  <S w={23} h={25}>{schem}</S>
                  <span className="ml-[7px] whitespace-nowrap">模电实验3.8.2 *</span>
                </div>
                <div className="mt-[9px] flex">
                  {[
                    <div key="l" className="w-0 h-0 border-y-[8px] border-y-transparent border-r-[8px] border-r-[#00007a]" />,
                    <div key="r" className="w-0 h-0 border-y-[8px] border-y-transparent border-l-[8px] border-l-[#00007a]" />,
                  ].map((t, i) => (
                    <div key={i} className="w-[23px] h-[22px] border-r-2 border-b-2 border-[#999] bg-[#efefef] flex items-center justify-center">{t}</div>
                  ))}
                </div>
              </div>
            </div>
          </div>
        </div>
      </div>
      {/* status */}
      <div className="h-[30px] shrink-0 flex items-end pl-[1400px] blur-[0.3px]">
        <div className="w-[68px] h-[24px] border-t-2 border-l-2 border-[#b5b5b5] flex items-center pl-[8px] text-[16px] leading-none">-</div>
        <div className="w-[172px] h-[24px] ml-[5px] border-t-2 border-l-2 border-[#b5b5b5]" />
        <div className="flex-1 h-[24px] ml-[5px] border-t-2 border-l-2 border-[#b5b5b5] flex items-center pl-[2px] text-[19px] leading-none text-[#111] whitespace-nowrap pb-[2px]">TEMP=50: 0.000 s</div>
      </div>
      <div className="absolute left-[1695px] top-[985px] text-[22px] text-[#555]/55 whitespace-nowrap z-20">CSDN @微笑波听失神</div>

      {/* instrument bar */}
      <div className="absolute left-[1880px] top-[245px] w-[39px] h-[555px] border-r-2 border-b-2 border-[#a8a8a8] flex flex-col items-center blur-[0.3px]">
        <div className="w-full h-[10px] shrink-0 mt-[3px] border-y-2 border-[#ccc]" />
        <div className="h-[3.500px] shrink-0" />
        {rightTools.map((n) => (
          <div key={n} className="h-[33px] flex items-center justify-center shrink-0"><Icon n={n} /></div>
        ))}
        <RSep h="h-[12px]" />
        <div className="h-[33px] flex items-center justify-center shrink-0"><Icon n="volt" /></div>
        <div className="h-[16px] flex items-center justify-center shrink-0"><TriR /></div>
        <RSep h="h-[15px]" />
        <div className="h-[33px] flex items-center justify-center shrink-0"><Icon n="lv" /></div>
        <div className="h-[16px] flex items-center justify-center shrink-0"><TriR /></div>
        <RSep h="h-[12px]" />
        <div className="h-[33px] flex items-center justify-center shrink-0"><Icon n="clamp" /></div>
      </div>

      <Dialog />
    </div>
  );
}
